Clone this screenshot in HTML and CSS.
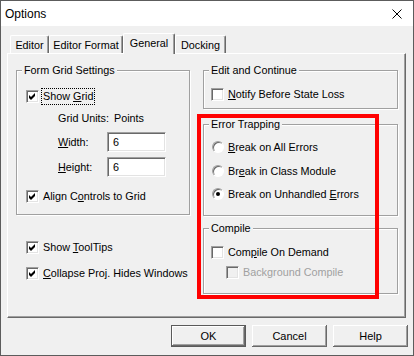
FILE: index.html
```html
<!DOCTYPE html>
<html lang="en">
<head>
  <meta charset="UTF-8">
  <title>Options</title>
  <link rel="stylesheet" href="styles.css">
</head>
<body>

<div class="window">
  <div class="titlebar">
    <span class="title">Options</span>
    <svg class="close" width="10" height="10" viewBox="0 0 10 10">
      <path d="M0.5 0.5 L9.5 9.5 M9.5 0.5 L0.5 9.5" stroke="#000" stroke-width="1" fill="none"/>
    </svg>
  </div>

  <div class="tabs">
    <div class="tab" style="width: 39px">Editor</div>
    <div class="tab" style="width: 74px">Editor Format</div>
    <div class="tab active" style="width: 52px">General</div>
    <div class="tab" style="width: 51px">Docking</div>
  </div>

  <div class="panel">
    <div class="col col-left">
      <fieldset class="group group-grid">
        <legend>Form Grid Settings</legend>
        <div class="row first">
          <span class="check checked"></span>
          <span class="focus">Show <u>G</u>rid</span>
        </div>
        <div class="row sub gap2">
          <span>Grid Units:</span><span class="units">Points</span>
        </div>
        <div class="row sub gap4">
          <span class="field-label"><u>W</u>idth:</span>
          <span class="textbox">6</span>
        </div>
        <div class="row sub gap5">
          <span class="field-label"><u>H</u>eight:</span>
          <span class="textbox">6</span>
        </div>
        <div class="row gap9">
          <span class="check checked"></span>
          <span>Align C<u>o</u>ntrols to Grid</span>
        </div>
      </fieldset>

      <div class="row loose tips">
        <span class="check checked"></span>
        <span>Show <u>T</u>oolTips</span>
      </div>
      <div class="row loose gap6">
        <span class="check checked"></span>
        <span><u>C</u>ollapse Proj. Hides Windows</span>
      </div>
    </div>

    <div class="col col-right">
      <fieldset class="group group-edit">
        <legend>Edit and Continue</legend>
        <div class="row first">
          <span class="check"></span>
          <span><u>N</u>otify Before State Loss</span>
        </div>
      </fieldset>

      <fieldset class="group group-errors">
        <legend>Error Trapping</legend>
        <div class="row first">
          <span class="radio"></span>
          <span><u>B</u>reak on All Errors</span>
        </div>
        <div class="row gap4">
          <span class="radio"></span>
          <span>Br<u>e</u>ak in Class Module</span>
        </div>
        <div class="row gap3">
          <span class="radio selected"></span>
          <span>Break on Unhandled <u>E</u>rrors</span>
        </div>
      </fieldset>

      <fieldset class="group group-compile">
        <legend>Compile</legend>
        <div class="row first">
          <span class="check"></span>
          <span>Com<u>p</u>ile On Demand</span>
        </div>
        <div class="row indent disabled">
          <span class="check"></span>
          <span>Back<u>g</u>round Compile</span>
        </div>
      </fieldset>
    </div>
  </div>

  <div class="buttons">
    <button class="btn default">OK</button>
    <button class="btn">Cancel</button>
    <button class="btn">Help</button>
  </div>

  <div class="highlight"></div>
</div>

</body>
</html>
```

FILE: styles.css
```css
body {
  margin: 0;
  font-family: "Liberation Sans", Arial, sans-serif;
  font-size: 10.8px;
  color: #000;
  background-color: #f0f0f0;
}
.window {
  position: relative;
  width: 414px;
  height: 356px;
  box-sizing: border-box;
  border: 1px solid #5c5c5c;
  background-color: #f0f0f0;
  white-space: nowrap;
}
.titlebar {
  height: 25px;
  background-color: #fff;
  display: flex;
  align-items: center;
  justify-content: space-between;
  padding: 0 11px 0 4px;
}
.title {
  font-size: 12px;
}
.tabs {
  display: flex;
  align-items: flex-end;
  height: 20px;
  margin-top: 7px;
  padding-left: 9px;
}
.tab {
  height: 18px;
  box-sizing: border-box;
  display: flex;
  align-items: center;
  justify-content: center;
  border-top: 1px solid #fff;
  border-left: 1px solid #fff;
  border-right: 1px solid #696969;
  box-shadow: inset -1px 0 #a0a0a0;
  border-radius: 2px 2px 0 0;
  background-color: #f0f0f0;
}
.tab.active {
  height: 21px;
  margin-bottom: -1px;
  padding-bottom: 2px;
  position: relative;
  z-index: 1;
}
.panel {
  display: flex;
  gap: 13px;
  height: 265px;
  box-sizing: border-box;
  margin: 0 7px 0 6px;
  padding: 9px 0 0 8px;
  border-top: 1px solid #fff;
  border-left: 1px solid #fff;
  border-right: 1px solid #696969;
  border-bottom: 1px solid #696969;
  box-shadow: inset -1px -1px #a0a0a0;
}
.col {
  display: flex;
  flex-direction: column;
}
.col-left {
  width: 174px;
}
.col-right {
  width: 195px;
}
.group {
  margin: 0;
  padding: 0 0 0 9px;
  box-sizing: border-box;
  border: 1px solid #a0a0a0;
  box-shadow: 1px 1px 0 #fff, inset 1px 1px 0 #fff;
  min-width: 0;
}
.group legend {
  margin-left: -4px;
  padding: 0 2px;
  line-height: 14px;
  background-color: #f0f0f0;
}
.col-right .group {
  padding-left: 7px;
}
.col-right .group legend {
  margin-left: -2px;
}
.group-grid {
  height: 152px;
}
.group-edit {
  height: 46px;
}
.group-errors {
  height: 99px;
  margin-top: 8px;
}
.group-compile {
  height: 73px;
  margin-top: 5px;
}
.row {
  display: flex;
  align-items: center;
  gap: 4px;
  height: 20px;
}
.group-grid .row.first {
  margin-top: 9px;
}
.group-edit .row.first,
.group-compile .row.first {
  margin-top: 7px;
}
.group-errors .row.first {
  margin-top: 6px;
}
.gap2 { margin-top: 2px; }
.gap3 { margin-top: 3px; }
.gap4 { margin-top: 4px; }
.gap5 { margin-top: 5px; }
.gap6 { margin-top: 6px; }
.gap9 { margin-top: 9px; }
.loose {
  padding-left: 10px;
}
.tips {
  margin-top: 22px;
}
.sub {
  padding-left: 32px;
  gap: 0;
}
.units {
  margin-left: 5px;
}
.field-label {
  width: 49px;
}
.indent {
  padding-left: 15px;
}
.focus {
  outline: 1px dotted #000;
  padding: 1px 1px 2px;
  margin-left: -1px;
}
.check {
  width: 13px;
  height: 13px;
  box-sizing: border-box;
  flex: none;
  background-color: #fff;
  border: 1px solid;
  border-color: #a0a0a0 #fff #fff #a0a0a0;
  box-shadow: inset 1px 1px #696969, inset -1px -1px #e3e3e3;
}
.check.checked {
  background-image: url("data:image/svg+xml;utf8,<svg xmlns='http://www.w3.org/2000/svg' width='11' height='11'><polygon points='2,4 4,6 8,2 8,5 4,9 2,7' fill='black'/></svg>");
  background-repeat: no-repeat;
}
.disabled {
  color: #a0a0a0;
}
.disabled .check {
  background-color: #f0f0f0;
}
.radio {
  width: 12px;
  height: 12px;
  box-sizing: border-box;
  flex: none;
  margin-left: 1px;
  border-radius: 50%;
  background-color: #fff;
  border: 1px solid;
  border-color: #a0a0a0 #fff #fff #a0a0a0;
  box-shadow: inset 1px 1px #696969;
  position: relative;
}
.radio.selected::after {
  content: "";
  position: absolute;
  left: 3px;
  top: 3px;
  width: 4px;
  height: 4px;
  border-radius: 50%;
  background-color: #000;
}
.textbox {
  width: 59px;
  height: 20px;
  box-sizing: border-box;
  padding-left: 5px;
  display: flex;
  align-items: center;
  background-color: #fff;
  border: 1px solid;
  border-color: #a0a0a0 #fff #fff #a0a0a0;
  box-shadow: inset 1px 1px #696969, inset -1px -1px #e3e3e3;
}
.buttons {
  display: flex;
  justify-content: flex-end;
  gap: 6px;
  margin-top: 7px;
  padding-right: 5px;
}
.btn {
  width: 75px;
  height: 22px;
  font-family: "Liberation Sans", Arial, sans-serif;
  font-size: 11px;
  color: #000;
  background-color: #f0f0f0;
  border: none;
  padding: 0;
  box-shadow: inset -1px -1px #696969, inset 1px 1px #fff, inset -2px -2px #a0a0a0;
}
.btn.default {
  border: 1px solid #5a5a5a;
  box-shadow: inset -1px -1px #696969, inset 1px 1px #fff, inset -2px -2px #a0a0a0;
}
.highlight {
  position: absolute;
  left: 196px;
  top: 113px;
  width: 182px;
  height: 185px;
  box-sizing: border-box;
  border: 4px solid #f00;
}
```
